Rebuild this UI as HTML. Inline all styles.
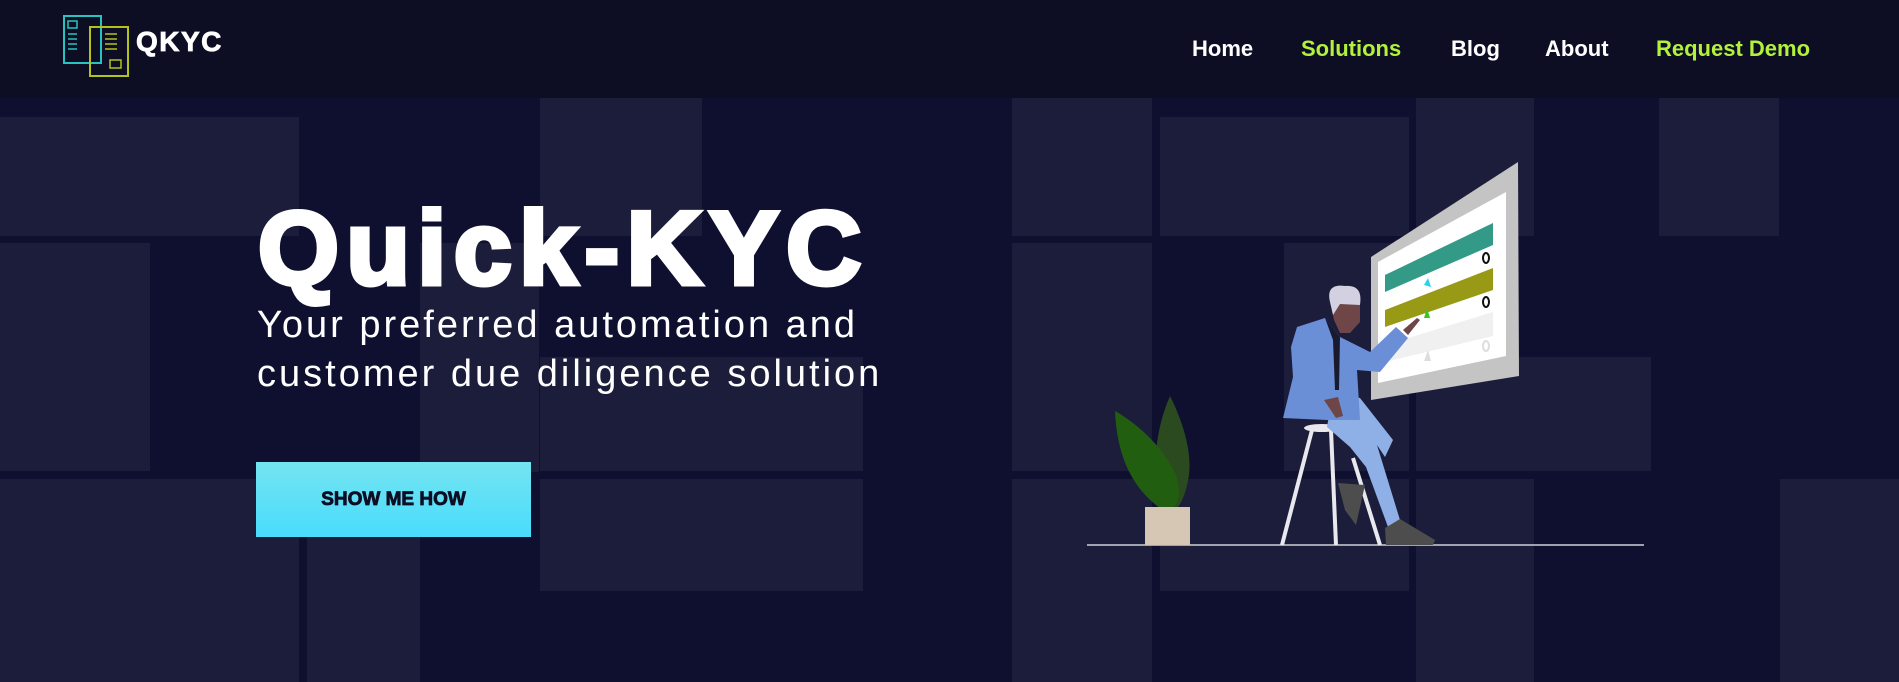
<!DOCTYPE html>
<html><head><meta charset="utf-8"><style>
*{margin:0;padding:0;box-sizing:border-box}
html,body{width:1899px;height:682px;overflow:hidden;background:#0f1030;font-family:"Liberation Sans",sans-serif}
.b{position:absolute;background:#1c1d3a}
header{position:absolute;left:0;top:0;width:1899px;height:98px;background:#0d0e24}
.nav a{position:absolute;top:36px;font-weight:bold;font-size:22px;color:#fff;text-decoration:none}
.g{color:#b2f23a!important}
</style></head><body>
<div class="b" style="left:0;top:117px;width:299px;height:119px"></div>
<div class="b" style="left:0;top:243px;width:150px;height:228px"></div>
<div class="b" style="left:0;top:479px;width:299px;height:203px"></div>
<div class="b" style="left:307px;top:537px;width:113px;height:145px"></div>
<div class="b" style="left:420px;top:243px;width:119px;height:229px"></div>
<div class="b" style="left:540px;top:98px;width:162px;height:138px"></div>
<div class="b" style="left:540px;top:357px;width:323px;height:114px"></div>
<div class="b" style="left:540px;top:479px;width:323px;height:112px"></div>
<div class="b" style="left:1012px;top:98px;width:140px;height:138px"></div>
<div class="b" style="left:1012px;top:243px;width:140px;height:228px"></div>
<div class="b" style="left:1012px;top:479px;width:140px;height:203px"></div>
<div class="b" style="left:1160px;top:117px;width:249px;height:119px"></div>
<div class="b" style="left:1284px;top:243px;width:125px;height:228px"></div>
<div class="b" style="left:1160px;top:479px;width:249px;height:112px"></div>
<div class="b" style="left:1416px;top:98px;width:118px;height:138px"></div>
<div class="b" style="left:1416px;top:479px;width:118px;height:203px"></div>
<div class="b" style="left:1416px;top:357px;width:235px;height:114px"></div>
<div class="b" style="left:1659px;top:98px;width:120px;height:138px"></div>
<div class="b" style="left:1780px;top:479px;width:119px;height:203px"></div>

<header>
<svg style="position:absolute;left:60px;top:12px" width="72" height="68" viewBox="60 12 72 68">
<rect x="64" y="16" width="37" height="47" fill="none" stroke="#27c3c0" stroke-width="2"/>
<rect x="68" y="21" width="9" height="7" fill="none" stroke="#27c3c0" stroke-width="1.5"/>
<path d="M68 34h9M68 39h9M68 44h9M68 49h9" stroke="#27c3c0" stroke-width="1.5"/>
<rect x="90" y="27" width="38" height="49" fill="none" stroke="#b4c21c" stroke-width="2"/>
<path d="M105 34h12M105 39h12M105 44h12M105 49h12" stroke="#b4c21c" stroke-width="1.5"/>
<rect x="110" y="60" width="11" height="8" fill="none" stroke="#b4c21c" stroke-width="1.5"/>
</svg>
<div style="position:absolute;left:136px;top:26px;font-weight:bold;font-size:28px;letter-spacing:1.5px;color:#fff;-webkit-text-stroke:0.8px #fff">QKYC</div>
<div class="nav">
<a style="left:1192px">Home</a>
<a class="g" style="left:1301px">Solutions</a>
<a style="left:1451px">Blog</a>
<a style="left:1545px">About</a>
<a class="g" style="left:1656px">Request Demo</a>
</div>
</header>

<div style="position:absolute;left:258px;top:194px;font-weight:900;font-size:104px;line-height:110px;letter-spacing:7.5px;color:#fff;-webkit-text-stroke:5px #fff">Quick-KYC</div>
<div style="position:absolute;left:257px;top:301px;font-size:38px;line-height:49px;letter-spacing:3px;color:#fff">Your preferred automation and<br>customer due diligence solution</div>
<div style="position:absolute;left:256px;top:462px;width:275px;height:75px;background:linear-gradient(#74e4f0,#49dcfd);color:#0d0e24;font-weight:900;font-size:19px;text-align:center;line-height:75px;-webkit-text-stroke:0.8px #0d0e24">SHOW ME HOW</div>

<svg style="position:absolute;left:0;top:0" width="1899" height="682">
<line x1="1087" y1="545" x2="1644" y2="545" stroke="#d0d0d8" stroke-width="1.5"/>
<path d="M1170 396 C1182 420 1192 450 1189 475 C1186 495 1180 505 1177 508 L1158 508 C1152 470 1155 430 1170 396Z" fill="#2b4a1f"/>
<path d="M1115 411 C1140 425 1165 450 1176 475 C1182 495 1178 505 1172 508 L1160 508 C1135 490 1117 460 1115 411Z" fill="#225e10"/>
<rect x="1145" y="507" width="45" height="38" fill="#d6c6b4"/>
<polygon points="1371,400 1371,257 1518,162 1519,376" fill="#c4c4c4"/>
<polygon points="1378,383 1378,262 1506,192 1506,356" fill="#fff"/>
<polygon points="1385,292 1385,275 1493,223 1493,245" fill="#339a88"/>
<polygon points="1385,327 1385,310 1493,268 1493,290" fill="#989a16"/>
<polygon points="1385,362 1385,345 1493,312 1493,336" fill="#f0f0f0"/>
<ellipse cx="1486" cy="258" rx="3" ry="5" fill="none" stroke="#111" stroke-width="2"/>
<ellipse cx="1486" cy="302" rx="3" ry="5" fill="none" stroke="#111" stroke-width="2"/>
<ellipse cx="1486" cy="346" rx="3" ry="5" fill="none" stroke="#ddd" stroke-width="2"/>
<polygon points="1424,285 1428,278 1431,287" fill="#2bd0f0"/>
<polygon points="1424,318 1427,308 1430,318" fill="#3ec41e"/>
<polygon points="1424,361 1428,350 1431,361" fill="#ddd"/>
<path d="M1312 430 L1282 545 M1331 430 L1336 545 M1353 458 L1380 545" stroke="#e8e8ee" stroke-width="4"/>
<ellipse cx="1322" cy="428" rx="18" ry="4" fill="#e8e8ee"/>
<path d="M1333 392 L1360 398 L1393 440 L1385 457 L1377 445 L1400 520 L1388 527 L1366 467 L1350 447 L1327 427Z" fill="#8eb0e6"/>
<path d="M1338 483 L1365 485 L1356 525 L1345 510Z" fill="#4d4d4d"/>
<path d="M1385 528 L1400 519 L1435 540 L1433 545 L1386 545Z" fill="#4d4d4d"/>
<path d="M1297 327 L1325 318 L1340 337 L1370 352 L1396 327 L1408 338 L1380 372 L1357 370 L1360 420 L1327 420 L1283 418 L1293 377 L1291 347Z" fill="#6a8fd6"/>
<path d="M1325 318 L1340 337 L1339 390 L1335 390 L1333 340Z" fill="#1a1a2e"/>
<path d="M1324 400 L1338 397 L1343 416 L1336 418Z" fill="#6e4648"/>
<path d="M1330 300 L1360 300 L1360 322 L1350 333 L1340 333 L1334 320Z" fill="#6e4648"/>
<path d="M1408 335 L1420 320 L1417 318 L1403 330Z" fill="#6e4648"/>
<path d="M1330 302 C1326 285 1338 285 1345 286 C1358 285 1362 292 1360 305 L1340 304 L1333 315Z" fill="#d3d0e2"/>
</svg>
</body></html>
